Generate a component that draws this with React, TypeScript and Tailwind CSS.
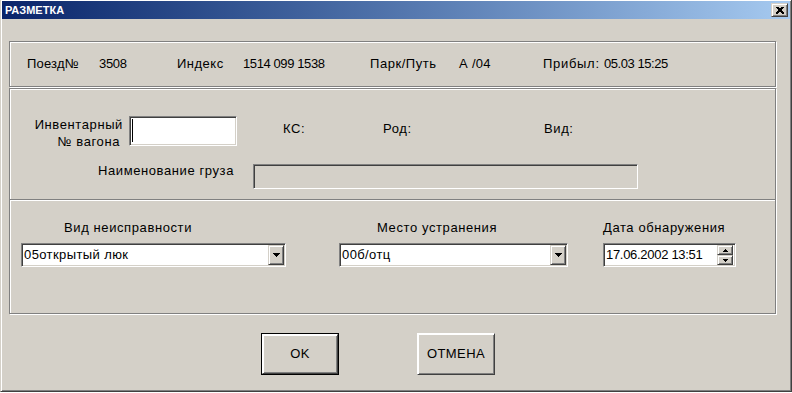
import React from "react";

const font = { fontFamily: '"Liberation Sans", Arial, sans-serif' };

function GroupBox({ className = "", children }: { className?: string; children?: React.ReactNode }) {
  return (
    <div
      className={`ml-[7px] w-[767px] box-border border border-[#808080] shadow-[inset_1px_1px_0_#fff,1px_1px_0_#fff] ${className}`}
    >
      {children}
    </div>
  );
}

function Sunken({ className = "", children }: { className?: string; children?: React.ReactNode }) {
  return (
    <div
      className={`box-border border border-t-[#808080] border-l-[#808080] border-b-white border-r-white shadow-[inset_1px_1px_0_#404040,inset_-1px_-1px_0_#d4d0c8] p-[1px] ${className}`}
    >
      {children}
    </div>
  );
}

function ArrowDown({ w = 7, h = 4 }: { w?: number; h?: number }) {
  return (
    <svg width={w} height={h} viewBox={`0 0 ${w} ${h}`} shapeRendering="crispEdges">
      <polygon points={`0,0 ${w},0 ${w / 2},${h}`} fill="#000" />
    </svg>
  );
}

function ArrowUp({ w = 5, h = 3 }: { w?: number; h?: number }) {
  return (
    <svg width={w} height={h} viewBox={`0 0 ${w} ${h}`} shapeRendering="crispEdges">
      <polygon points={`0,${h} ${w},${h} ${w / 2},0`} fill="#000" />
    </svg>
  );
}

const btn3d =
  "box-border border border-t-[#d4d0c8] border-l-[#d4d0c8] border-b-[#404040] border-r-[#404040] shadow-[inset_1px_1px_0_#fff,inset_-1px_-1px_0_#808080] bg-[#d4d0c8]";

function Combo({ value, width }: { value: string; width: string }) {
  return (
    <Sunken className={`${width} h-[24px] bg-white`}>
      <div className="flex h-full">
        <div className="flex-1 pl-[1px] text-[13px] leading-[20px] tracking-[0.4px] text-black">{value}</div>
        <div className={`${btn3d} w-[16px] h-[20px] flex items-center justify-center`}>
          <ArrowDown />
        </div>
      </div>
    </Sunken>
  );
}

export default function App() {
  return (
    <div className="w-[792px] h-[393px] bg-white" style={font}>
      <div className="w-[792px] h-[392px] box-border border-l border-l-[#d4d0c8] border-r border-r-[#404040] border-b border-b-[#404040] bg-[#d4d0c8] shadow-[inset_1px_1px_0_#fff,inset_-1px_-1px_0_#808080] pt-[1px] pl-[1px] pr-[1px]">
        {/* title bar */}
        <div className="h-[18px] bg-gradient-to-r from-[#0a246a] to-[#a6caf0] flex items-center justify-between pl-[3px] pr-[2px]">
          <span className="text-white font-bold text-[11px] leading-[18px]">РАЗМЕТКА</span>
          <div className={`${btn3d} w-[17px] h-[14px] flex items-center justify-center`}>
            <svg width="8" height="7" viewBox="0 0 8 7" shapeRendering="crispEdges">
              <path d="M0.5 0 L7.5 7 M1.5 0 L8.5 7 M7.5 0 L0.5 7 M6.5 0 L-0.5 7" stroke="#000" strokeWidth="1" />
            </svg>
          </div>
        </div>

        {/* train info */}
        <GroupBox className="mt-[22px] h-[46px]">
          <div className="flex items-center h-full pl-[17px] text-[13px] text-black">
            <span className="w-[72px] tracking-[0.2px]">Поезд№</span>
            <span className="w-[78px] tracking-[-0.3px]">3508</span>
            <span className="w-[66px] tracking-[0.5px]">Индекс</span>
            <span className="w-[127px] tracking-[-0.4px]">1514 099 1538</span>
            <span className="w-[89px] tracking-[0.55px]">Парк/Путь</span>
            <span className="w-[84px] tracking-[0.3px]">А /04</span>
            <span className="w-[61px] tracking-[0.7px]">Прибыл:</span>
            <span className="tracking-[-0.45px]">05.03 15:25</span>
          </div>
        </GroupBox>

        {/* wagon */}
        <GroupBox className="mt-[1px] h-[112px]">
          <div className="flex items-start mt-[27px] text-[13px] text-black tracking-[0.6px]">
            <div className="w-[113px] text-right leading-[17px]">
              <div>Инвентарный</div>
              <div className="pr-[3px]">№ вагона</div>
            </div>
            <Sunken className="ml-[6px] w-[108px] h-[30px] bg-white">
              <div className="ml-[1px] mt-[1px] w-[1px] h-[23px] bg-black" />
            </Sunken>
            <span className="ml-[46px] w-[100px] mt-[4px] leading-[17px]">КС:</span>
            <span className="w-[161px] mt-[4px] leading-[17px]">Род:</span>
            <span className="mt-[4px] leading-[17px]">Вид:</span>
          </div>
          <div className="flex items-start mt-[14px] text-[13px] text-black tracking-[0.6px]">
            <div className="w-[224px] text-right leading-[17px] -mt-[2px]">Наименование груза</div>
            <Sunken className="ml-[19px] w-[385px] h-[25px] bg-[#d4d0c8]" />
          </div>
        </GroupBox>

        {/* defect */}
        <GroupBox className="-mt-[1px] h-[115px]">
          <div className="flex mt-[20px] pl-[54px] text-[13px] leading-[16px] tracking-[0.6px] text-black">
            <span className="w-[313px]">Вид неисправности</span>
            <span className="w-[226px]">Место устранения</span>
            <span>Дата обнаружения</span>
          </div>
          <div className="flex mt-[7px] pl-[11px]">
            <Combo value="05открытый люк" width="w-[265px]" />
            <div className="ml-[53px]">
              <Combo value="00б/отц" width="w-[229px]" />
            </div>
            <Sunken className="ml-[35px] w-[133px] h-[24px] bg-white">
              <div className="flex h-full">
                <div className="flex-1 pl-[1px] text-[13px] leading-[20px] tracking-[-0.3px] text-black">
                  17.06.2002 13:51
                </div>
                <div className="flex flex-col w-[16px] mr-[1px]">
                  <div className={`${btn3d} h-[10px] flex items-center justify-center`}>
                    <ArrowUp />
                  </div>
                  <div className={`${btn3d} h-[10px] flex items-center justify-center`}>
                    <ArrowDown w={5} h={3} />
                  </div>
                </div>
              </div>
            </Sunken>
          </div>
        </GroupBox>

        {/* buttons */}
        <div className="flex mt-[19px] ml-[259px] text-[13px] text-black tracking-[0.4px]">
          <div className="w-[78px] h-[42px] box-border border border-black">
            <div className={`${btn3d} w-full h-full flex items-center justify-center border-t-white border-l-white`}>
              OK
            </div>
          </div>
          <div
            className={`ml-[78px] w-[78px] h-[42px] ${btn3d} border-t-white border-l-white flex items-center justify-center`}
          >
            ОТМЕНА
          </div>
        </div>
      </div>
    </div>
  );
}
